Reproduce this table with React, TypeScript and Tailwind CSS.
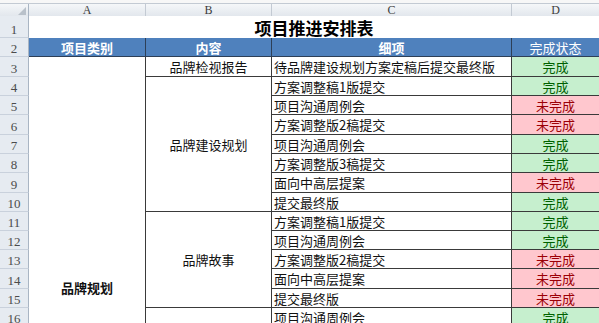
const rows = [
  { n: 3, h: "h-[20px]", task: "待品牌建设规划方案定稿后提交最终版", done: true },
  { n: 4, h: "h-[19px]", task: "方案调整稿1版提交", done: true },
  { n: 5, h: "h-[19px]", task: "项目沟通周例会", done: false },
  { n: 6, h: "h-[20px]", task: "方案调整版2稿提交", done: false },
  { n: 7, h: "h-[19px]", task: "项目沟通周例会", done: true },
  { n: 8, h: "h-[19px]", task: "方案调整版3稿提交", done: true },
  { n: 9, h: "h-[20px]", task: "面向中高层提案", done: false },
  { n: 10, h: "h-[19px]", task: "提交最终版", done: true },
  { n: 11, h: "h-[19px]", task: "方案调整稿1版提交", done: true },
  { n: 12, h: "h-[19px]", task: "项目沟通周例会", done: true },
  { n: 13, h: "h-[19px]", task: "方案调整版2稿提交", done: false },
  { n: 14, h: "h-[20px]", task: "面向中高层提案", done: false },
  { n: 15, h: "h-[19px]", task: "提交最终版", done: false },
  { n: 16, h: "h-[19px]", task: "项目沟通周例会", done: true },
];

const groups = [
  { h: "h-[20px]", label: "品牌检视报告" },
  { h: "h-[135px]", label: "品牌建设规划" },
  { h: "h-[96px]", label: "品牌故事" },
];

const serif = "font-['Liberation_Serif',serif]";
const cjk = "font-['Noto_Sans_CJK_SC',sans-serif]";

function RowNum({ n, h }: { n: number; h: string }) {
  return (
    <div className={`${h} w-[29px] shrink-0 flex items-end justify-center pb-[1px] bg-[#e6ebf1] border-b border-r border-b-[#c9d1dc] border-r-[#a9b5c3] text-[13px] leading-none text-[#4b4b4b] ${serif}`}>
      {n}
    </div>
  );
}

export default function App() {
  return (
    <div className={`w-[599px] h-[323px] overflow-hidden bg-white text-[13px] text-[#111] ${cjk}`}>
      {/* column letters */}
      <div className="h-[3px] bg-[#f7f7f7]" />
      <div className={`flex h-[13px] border-t border-[#c3cad3] bg-gradient-to-b from-[#f5f7f9] to-[#e2e7ed] text-[12px] leading-none text-[#3c3c3c] ${serif}`}>
        <div className="w-[29px] shrink-0 flex items-end justify-end pr-[2px] pb-[1px] border-r border-[#a9b5c3]">
          <svg width="8" height="8" viewBox="0 0 8 8">
            <path d="M8 0 L8 8 L0 8 Z" fill="#b9c1ca" />
          </svg>
        </div>
        <div className="w-[117px] shrink-0 flex items-center justify-center border-r border-[#c3cad3]">A</div>
        <div className="w-[126px] shrink-0 flex items-center justify-center border-r border-[#c3cad3]">B</div>
        <div className="w-[240px] shrink-0 flex items-center justify-center border-r border-[#c3cad3]">C</div>
        <div className="flex-1 flex items-center justify-center">D</div>
      </div>

      {/* row 1: title */}
      <div className="flex">
        <RowNum n={1} h="h-[22px]" />
        <div className="flex-1 flex items-center justify-center text-[17px] font-bold leading-none text-black">
          项目推进安排表
        </div>
      </div>

      {/* row 2: header */}
      <div className="flex">
        <RowNum n={2} h="h-[19px]" />
        <div className="flex flex-1 bg-[#4f81bd] text-white leading-none border-b border-[#2d3f57]">
          <div className="w-[117px] shrink-0 flex items-center justify-center font-bold border-r border-[#2d3f57]">项目类别</div>
          <div className="w-[126px] shrink-0 flex items-center justify-center font-bold border-r border-[#2d3f57]">内容</div>
          <div className="w-[240px] shrink-0 flex items-center justify-center font-bold border-r border-[#2d3f57]">细项</div>
          <div className="flex-1 flex items-center justify-center">完成状态</div>
        </div>
      </div>

      {/* body */}
      <div className="flex">
        <div className="flex flex-col">
          {rows.map((r) => (
            <RowNum key={r.n} n={r.n} h={r.h} />
          ))}
        </div>

        <div className="w-[117px] shrink-0 border-r border-[#3a3a3a] flex justify-center pt-[224px]">
          <span className="font-bold leading-none h-fit">品牌规划</span>
        </div>

        <div className="w-[126px] shrink-0 flex flex-col">
          {groups.map((g) => (
            <div key={g.label} className={`${g.h} flex items-center justify-center border-b border-r border-[#3a3a3a] leading-none`}>
              {g.label}
            </div>
          ))}
          <div className="flex-1 border-r border-[#3a3a3a]" />
        </div>

        <div className="flex-1 flex flex-col">
          {rows.map((r) => (
            <div key={r.n} className={`${r.h} flex border-b border-[#3a3a3a] leading-none`}>
              <div className="w-[240px] shrink-0 flex items-center pl-[2px] border-r border-[#3a3a3a]">{r.task}</div>
              <div
                className={
                  r.done
                    ? "flex-1 flex items-center justify-center bg-[#c6efce] text-[#006100]"
                    : "flex-1 flex items-center justify-center bg-[#ffc7ce] text-[#9c0006]"
                }
              >
                {r.done ? "完成" : "未完成"}
              </div>
            </div>
          ))}
        </div>
      </div>
    </div>
  );
}
